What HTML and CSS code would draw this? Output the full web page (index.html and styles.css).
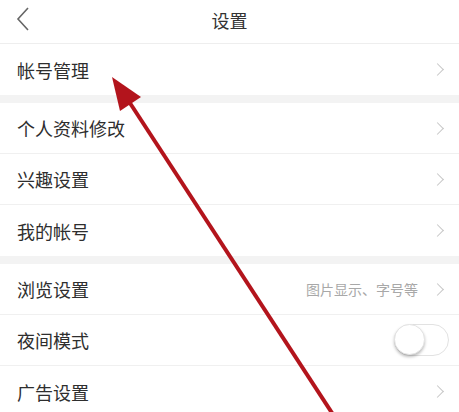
FILE: index.html
```html
<!DOCTYPE html>
<html lang="zh">
<head>
<meta charset="utf-8">
<link rel="stylesheet" href="styles.css">
</head>
<body>
<div class="page">
  <header class="topbar">
    <svg class="back" width="14" height="24" viewBox="0 0 14 24"><path d="M12 1 L2 12 L12 23" fill="none" stroke="#666" stroke-width="1.6"/></svg>
    <div class="title">设置</div>
  </header>
  <section class="group first">
    <div class="row"><span class="label">帐号管理</span><span class="chev"></span></div>
  </section>
  <section class="group">
    <div class="row"><span class="label">个人资料修改</span><span class="chev"></span></div>
    <div class="row"><span class="label">兴趣设置</span><span class="chev"></span></div>
    <div class="row"><span class="label">我的帐号</span><span class="chev"></span></div>
  </section>
  <section class="group">
    <div class="row"><span class="label">浏览设置</span><span class="hint">图片显示、字号等</span><span class="chev"></span></div>
    <div class="row"><span class="label">夜间模式</span><span class="switch"><span class="knob"></span></span></div>
    <div class="row"><span class="label">广告设置</span><span class="chev"></span></div>
  </section>
  <svg class="arrow" width="459" height="412" viewBox="0 0 459 412">
    <line x1="128" y1="100" x2="334" y2="416" stroke="#b3141c" stroke-width="4"/>
    <polygon points="112,77 141,97 120,111" fill="#b3141c"/>
  </svg>
</div>
</body>
</html>
```
FILE: styles.css
```css
html, body { margin: 0; padding: 0; background: #fff; }
body { font-family: "Noto Sans CJK SC", "Noto Sans", sans-serif; color: #333; }
.page { position: relative; width: 459px; height: 412px; overflow: hidden; background: #f3f3f3; }
.topbar { height: 43px; background: #fff; border-bottom: 1px solid #eee; display: flex; align-items: center; justify-content: center; position: relative; }
.back { position: absolute; left: 16px; top: 7px; }
.title { font-size: 18px; color: #333; line-height: 1; margin-top: -4px; }
.group { background: #fff; margin-top: 8px; }
.group.first { margin-top: 0; }
.row { height: 51px; box-sizing: border-box; display: flex; align-items: center; padding: 0 12px 0 17px; border-bottom: 1px solid #f0f0f0; }
.row:last-child { border-bottom: none; }
.label { font-size: 18px; flex: 1; line-height: 1; color: #2e2e2e; }
.hint { font-size: 14px; color: #a8a8a8; margin-right: 15px; }
.chev { width: 8px; height: 8px; border-top: 1.5px solid #c6c6c6; border-right: 1.5px solid #c6c6c6; transform: rotate(45deg); margin-right: 5px; }
.switch { width: 55px; height: 32px; border-radius: 16px; border: 1.5px solid #e2e2e2; box-sizing: border-box; position: relative; margin-right: -2px; }
.knob { position: absolute; left: -1px; top: -1px; width: 31px; height: 31px; border-radius: 50%; background: #fff; box-shadow: 0 2px 3px rgba(0,0,0,0.25); border: 1px solid #e4e4e4; box-sizing: border-box; }
.arrow { position: absolute; left: 0; top: 0; }
```
